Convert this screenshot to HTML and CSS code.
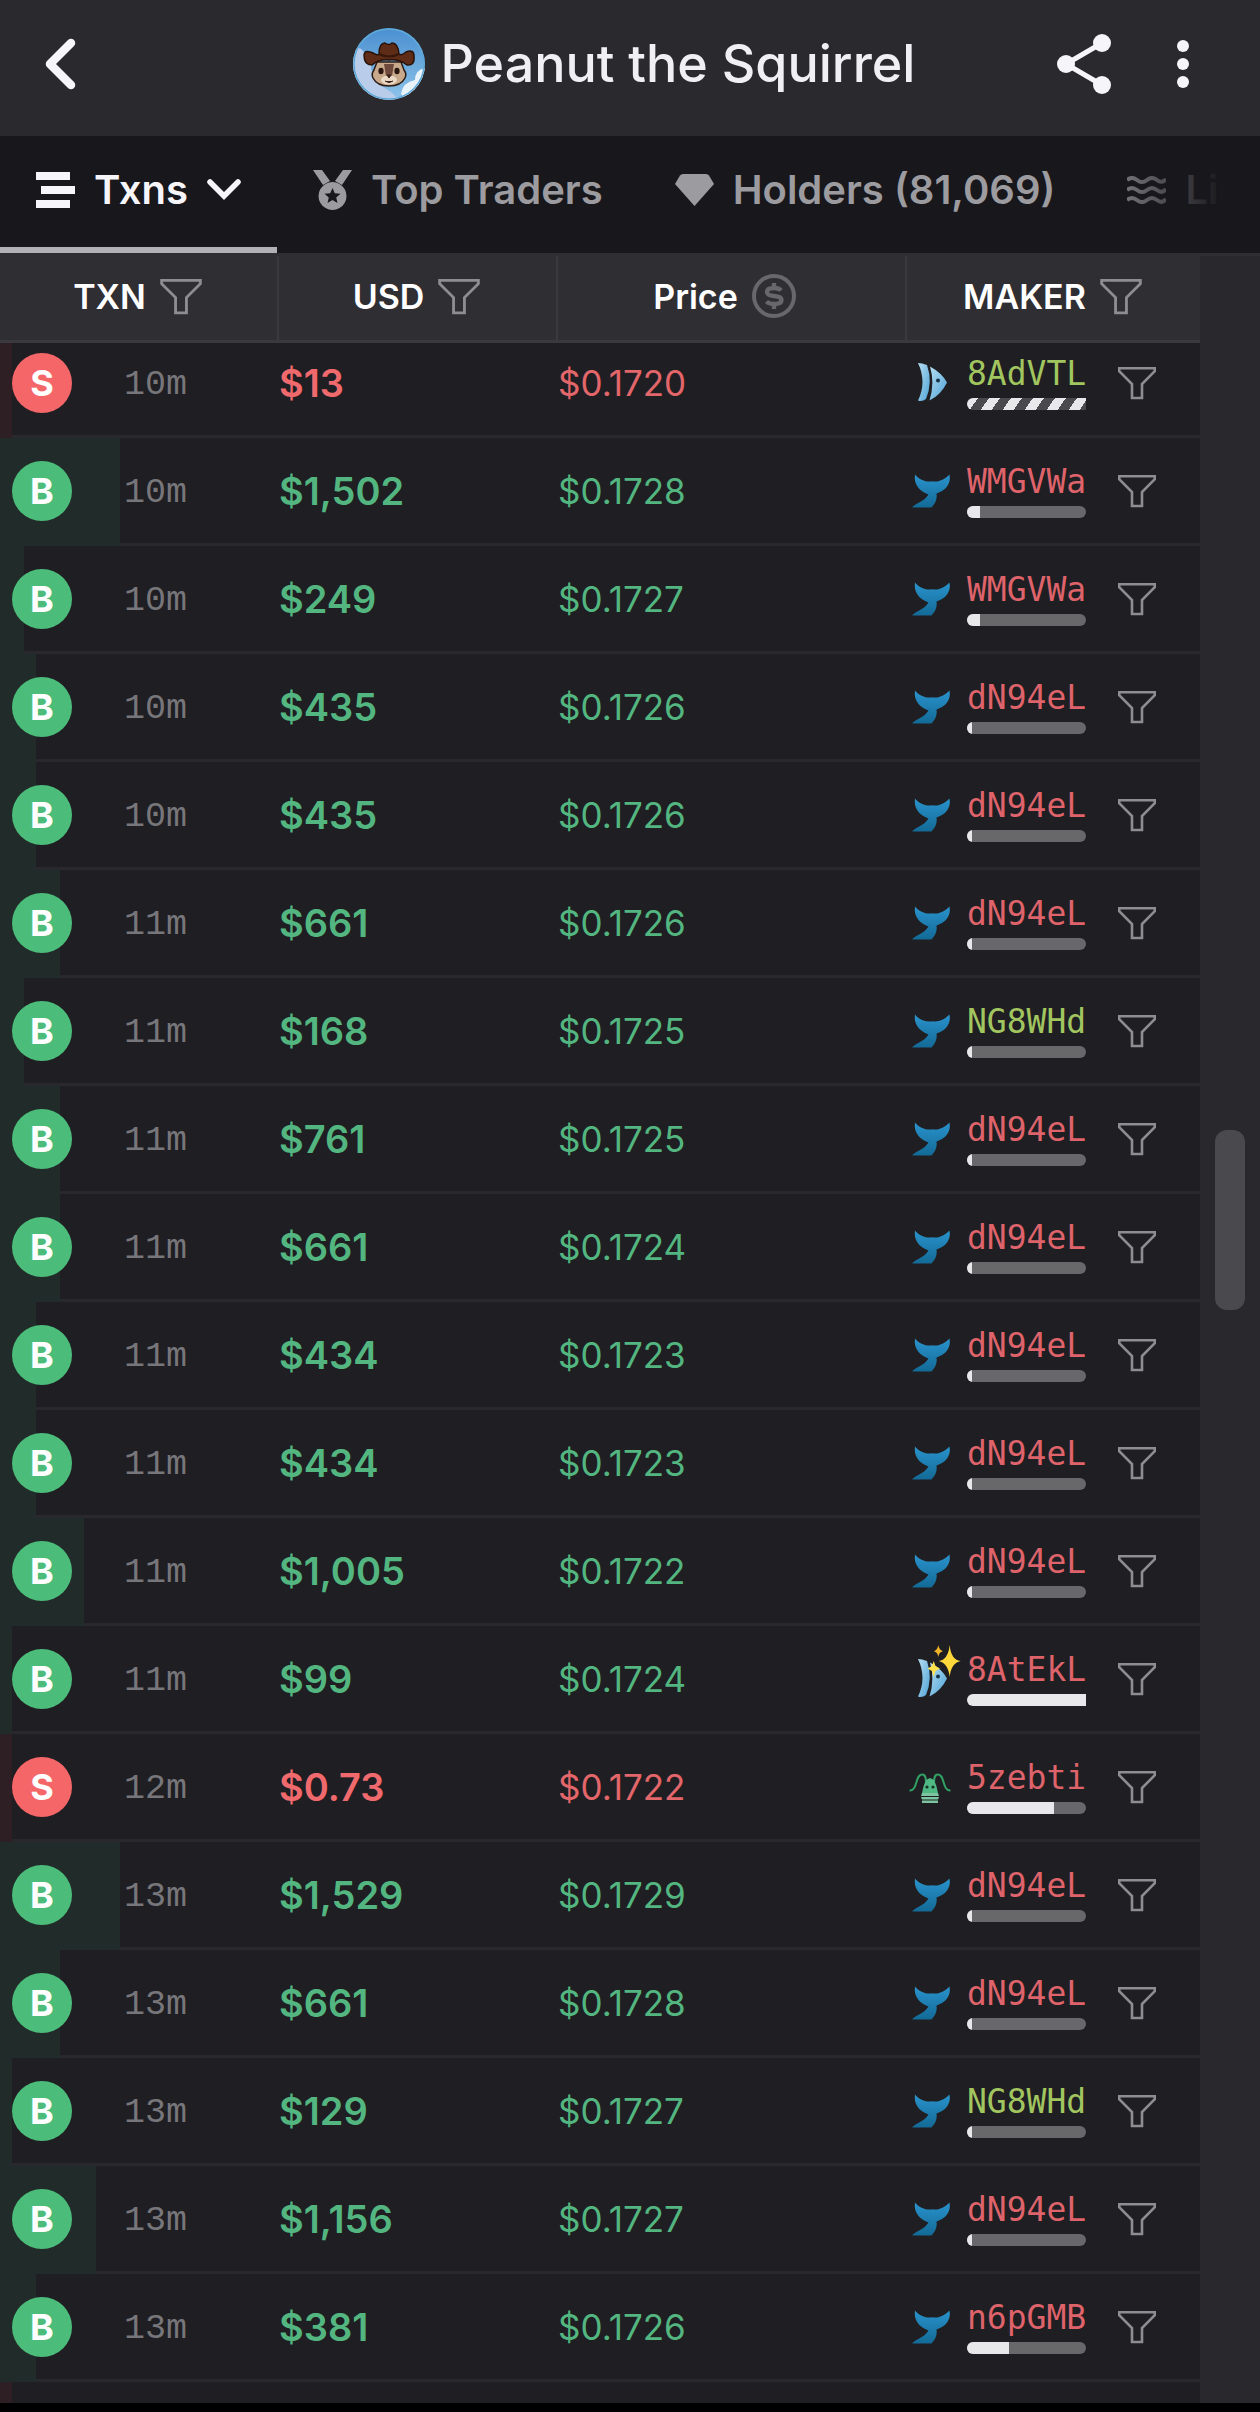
FILE: index.html
```html
<!DOCTYPE html>
<html lang="en">
<head>
<meta charset="utf-8">
<meta name="viewport" content="width=device-width, initial-scale=1">
<title>Peanut the Squirrel</title>
<link rel="stylesheet" href="styles.css">
</head>
<body>
<svg class="sprite" aria-hidden="true">
  <defs>
    <linearGradient id="g-whale" x1="0" y1="0" x2="0" y2="1"><stop offset="0" stop-color="#2a93cd"/><stop offset="1" stop-color="#136a96"/></linearGradient>
    <linearGradient id="g-fish" x1="0" y1="0" x2="1" y2="1"><stop offset="0" stop-color="#b5def0"/><stop offset="1" stop-color="#4fa3d8"/></linearGradient>
    <linearGradient id="g-sky" x1="0" y1="0" x2="0" y2="1"><stop offset="0" stop-color="#4a8fd0"/><stop offset="1" stop-color="#8dc4ea"/></linearGradient>
    <clipPath id="c-avatar"><circle cx="36" cy="36" r="36"/></clipPath>
  </defs>
  <symbol id="funnel" viewBox="0 0 38 34"><path d="M1.200 2.200H36.800V5.200L24 18V32H14V18L1.200 5.200Z" fill="none" stroke="currentColor" stroke-width="2.600"/></symbol>
  <symbol id="whale" viewBox="0 0 44 44"><path d="M7 5.500C11 11 19 13.500 24.700 12.300C31 13.500 37 10 41.500 5.500C43.500 15 37 22 28.500 24.500C29.500 30 27 35 23.500 38.500H4.200C7 34.500 16 33 20.500 25.500C11 22 5.500 15 7 5.500Z" fill="url(#g-whale)"/></symbol>
  <symbol id="fish" viewBox="0 0 44 44"><path d="M10 2Q14 2 19 4Q25 21 18 38Q14 41 10 39.500Q19 21 10 2Z" fill="url(#g-fish)"/><path d="M22 5.500Q34 12 39 21.500Q33 34 21.500 39.500Q27 22 22 5.500Z" fill="url(#g-fish)"/><circle cx="30" cy="19.500" r="2" fill="#17324a"/></symbol>
  <symbol id="lobster" viewBox="0 0 44 44"><path d="M1.500 25.500C10 26 7 9.500 14 9.500C18 9.500 18 14 18 18M42.500 25.500C34 26 37 9.500 30 9.500C26 9.500 26 14 26 18" fill="none" stroke="#31a065" stroke-width="2"/><path d="M22 13L26 15Q29 21 30 28H14Q15 21 18 15Z" fill="#4fb883"/><path d="M14 28h16l1 3H13ZM13 32h18l-1 2.500H14ZM14 35.500h16V38H14Z" fill="#7cc5a0"/><circle cx="19" cy="22" r="1.600" fill="#173325"/><circle cx="25" cy="22" r="1.600" fill="#173325"/></symbol>
  <symbol id="sparkles" viewBox="0 0 34 40"><path d="M21.700 2Q23 17 32.700 18Q23 20 21.700 34Q20 20 10.700 18Q20 17 21.700 2Z" fill="#ffd93b"/><path d="M10.300 2Q11 7 15 8.200Q11 9 10.300 14Q9.500 9 6 8.200Q9.500 7 10.300 2Z" fill="#f0b429"/><path d="M5.700 18L7.500 23L12 25.500L7.500 28L5.700 34L4 28L-.500 25.500L4 23Z" fill="#ffe14d"/></symbol>
</svg>

<div class="app">
  <header class="topbar">
    <button class="icon-btn back" aria-label="Back"><svg width="32" height="52" viewBox="0 0 32 52"><path d="M27 5L6 26L27 47" fill="none" stroke="#f6f5fa" stroke-width="8.500" stroke-linecap="round" stroke-linejoin="round"/></svg></button>
    <div class="token">
      <svg class="avatar" viewBox="0 0 72 72" role="img" aria-label="Token logo">
        <g clip-path="url(#c-avatar)">
          <rect width="72" height="72" fill="url(#g-sky)"/>
          <path d="M0 20Q8 18 12 26Q20 30 18 42Q30 48 28 58Q40 64 46 72H0Z" fill="#b9cdea"/>
          <path d="M72 40Q62 42 62 52Q50 54 48 66L54 72H72Z" fill="#e8f3fa"/>
        </g>
        <circle cx="36" cy="36" r="35" fill="none" stroke="#5fa9d8" stroke-width="1.500"/>
        <path d="M21 42Q18 46 20 50Q24 58 36 58Q48 58 52 50Q54 46 51 42L48 34H24Z" fill="#c9a98c" stroke="#2a1a14" stroke-width="1.500"/>
        <path d="M31 36h10l-2 12h-6Z" fill="#6f4a3c"/>
        <ellipse cx="36" cy="52" rx="8" ry="4.500" fill="#ead9c5"/>
        <ellipse cx="28" cy="43" rx="2.600" ry="3.200" fill="#2a1712"/><ellipse cx="44" cy="43" rx="2.600" ry="3.200" fill="#2a1712"/>
        <path d="M34 47h4l-2 3ZM32 53q4 3 8 0" fill="#3a211a" stroke="#3a211a"/>
        <path d="M11 27Q12 21 20 25Q25 28 26 26Q26 15 32 15Q36 18 39 15Q45 15 46 26Q48 28 53 24Q61 21 61 28Q62 38 54 37Q46 31 36 32Q26 31 19 37Q11 37 11 27Z" fill="#5e2c17" stroke="#2a120a" stroke-width="1.500"/>
        <path d="M26 26Q36 31 46 26" fill="none" stroke="#35170b" stroke-width="2"/>
      </svg>
      <h1 class="token-name">Peanut the Squirrel</h1>
    </div>
    <div class="actions">
      <button class="icon-btn" aria-label="Share"><svg width="54" height="60" viewBox="0 0 54 60"><path d="M45 9L9 30L45 51" fill="none" stroke="#f6f5fa" stroke-width="5"/><g fill="#f6f5fa"><circle cx="45" cy="9" r="9"/><circle cx="9" cy="30" r="9"/><circle cx="45" cy="51" r="9"/></g></svg></button>
      <button class="icon-btn more" aria-label="More"><svg width="12" height="50" viewBox="0 0 12 50" fill="#f6f5fa"><circle cx="6" cy="7" r="6"/><circle cx="6" cy="25" r="6"/><circle cx="6" cy="43" r="6"/></svg></button>
    </div>
  </header>

  <nav class="tabs">
    <button class="tab active"><svg width="39" height="36" viewBox="0 0 39 36" fill="currentColor"><path d="M0 0h34v8H0ZM5 14h34v8H5ZM0 28h34v8H0Z"/></svg>Txns<svg class="caret" width="34" height="22" viewBox="0 0 34 22"><path d="M3 3L17 17L31 3" fill="none" stroke="currentColor" stroke-width="5.500" stroke-linecap="round"/></svg></button>
    <button class="tab"><svg width="39" height="40" viewBox="0 0 39 40" fill="currentColor"><path d="M0 0h9l8 11l-7 4ZM39 0h-9l-8 11l7 4Z"/><path fill-rule="evenodd" d="M19.500 12a14 14 0 1 0 .010 0ZM19.500 18l2.300 5.200l5.700.500l-4.300 3.800l1.300 5.500l-5-3l-5 3l1.300-5.500l-4.300-3.800l5.700-.500Z"/></svg>Top Traders</button>
    <button class="tab"><svg width="39" height="32" viewBox="0 0 39 32" fill="currentColor"><path d="M8 0H31Q33 0 34 1.500L39 10L19.500 32L0 10L5 1.500Q6 0 8 0Z"/></svg>Holders (81,069)</button>
    <button class="tab"><svg width="39" height="28" viewBox="0 0 39 28" fill="none" stroke="currentColor" stroke-width="4"><path d="M0 4q5-4 10 0t10 0t10 0t9-1M0 14q5-4 10 0t10 0t10 0t9-1M0 24q5-4 10 0t10 0t10 0t9-1"/></svg>Liquidity</button>
  </nav>

  <main class="panel">
    <table class="txns">
      <thead>
        <tr>
          <th scope="col">TXN<svg class="head-icon"><use href="#funnel"/></svg></th>
          <th scope="col">USD<svg class="head-icon"><use href="#funnel"/></svg></th>
          <th scope="col" class="price-head">Price<svg class="coin" viewBox="0 0 44 44" fill="none" stroke="currentColor"><circle cx="22" cy="22" r="20" stroke-width="4"/><path d="M29 16.500Q27 14 22 14Q15 14 15 18Q15 21.500 22 22Q29.500 22.500 29.500 26Q29.500 30 22 30Q17 30 14.500 27.500M22 9V14M22 30V35" stroke-width="4.400"/></svg></th>
          <th scope="col">MAKER<svg class="head-icon"><use href="#funnel"/></svg></th>
        </tr>
      </thead>
      <tbody>
        <tr class="sell"><td><i class="fill" style="width:12px"></i><b class="side">S</b><time>10m</time></td><td class="usd">$13</td><td class="price">$0.1720</td><td class="maker"><svg class="tier"><use href="#fish"/></svg><a href="#" class="who fresh">8AdVTL<span class="bar striped"></span></a><button class="filter" aria-label="Filter by maker"><svg><use href="#funnel"/></svg></button></td></tr>
        <tr class="buy"><td><i class="fill" style="width:120px"></i><b class="side">B</b><time>10m</time></td><td class="usd">$1,502</td><td class="price">$0.1728</td><td class="maker"><svg class="tier"><use href="#whale"/></svg><a href="#" class="who">WMGVWa<span class="bar"><i style="width:11%"></i></span></a><button class="filter" aria-label="Filter by maker"><svg><use href="#funnel"/></svg></button></td></tr>
        <tr class="buy"><td><i class="fill" style="width:24px"></i><b class="side">B</b><time>10m</time></td><td class="usd">$249</td><td class="price">$0.1727</td><td class="maker"><svg class="tier"><use href="#whale"/></svg><a href="#" class="who">WMGVWa<span class="bar"><i style="width:11%"></i></span></a><button class="filter" aria-label="Filter by maker"><svg><use href="#funnel"/></svg></button></td></tr>
        <tr class="buy"><td><i class="fill" style="width:36px"></i><b class="side">B</b><time>10m</time></td><td class="usd">$435</td><td class="price">$0.1726</td><td class="maker"><svg class="tier"><use href="#whale"/></svg><a href="#" class="who">dN94eL<span class="bar"><i style="width:4%"></i></span></a><button class="filter" aria-label="Filter by maker"><svg><use href="#funnel"/></svg></button></td></tr>
        <tr class="buy"><td><i class="fill" style="width:36px"></i><b class="side">B</b><time>10m</time></td><td class="usd">$435</td><td class="price">$0.1726</td><td class="maker"><svg class="tier"><use href="#whale"/></svg><a href="#" class="who">dN94eL<span class="bar"><i style="width:4%"></i></span></a><button class="filter" aria-label="Filter by maker"><svg><use href="#funnel"/></svg></button></td></tr>
        <tr class="buy"><td><i class="fill" style="width:60px"></i><b class="side">B</b><time>11m</time></td><td class="usd">$661</td><td class="price">$0.1726</td><td class="maker"><svg class="tier"><use href="#whale"/></svg><a href="#" class="who">dN94eL<span class="bar"><i style="width:4%"></i></span></a><button class="filter" aria-label="Filter by maker"><svg><use href="#funnel"/></svg></button></td></tr>
        <tr class="buy"><td><i class="fill" style="width:24px"></i><b class="side">B</b><time>11m</time></td><td class="usd">$168</td><td class="price">$0.1725</td><td class="maker"><svg class="tier"><use href="#whale"/></svg><a href="#" class="who fresh">NG8WHd<span class="bar"><i style="width:4%"></i></span></a><button class="filter" aria-label="Filter by maker"><svg><use href="#funnel"/></svg></button></td></tr>
        <tr class="buy"><td><i class="fill" style="width:60px"></i><b class="side">B</b><time>11m</time></td><td class="usd">$761</td><td class="price">$0.1725</td><td class="maker"><svg class="tier"><use href="#whale"/></svg><a href="#" class="who">dN94eL<span class="bar"><i style="width:4%"></i></span></a><button class="filter" aria-label="Filter by maker"><svg><use href="#funnel"/></svg></button></td></tr>
        <tr class="buy"><td><i class="fill" style="width:60px"></i><b class="side">B</b><time>11m</time></td><td class="usd">$661</td><td class="price">$0.1724</td><td class="maker"><svg class="tier"><use href="#whale"/></svg><a href="#" class="who">dN94eL<span class="bar"><i style="width:4%"></i></span></a><button class="filter" aria-label="Filter by maker"><svg><use href="#funnel"/></svg></button></td></tr>
        <tr class="buy"><td><i class="fill" style="width:36px"></i><b class="side">B</b><time>11m</time></td><td class="usd">$434</td><td class="price">$0.1723</td><td class="maker"><svg class="tier"><use href="#whale"/></svg><a href="#" class="who">dN94eL<span class="bar"><i style="width:4%"></i></span></a><button class="filter" aria-label="Filter by maker"><svg><use href="#funnel"/></svg></button></td></tr>
        <tr class="buy"><td><i class="fill" style="width:36px"></i><b class="side">B</b><time>11m</time></td><td class="usd">$434</td><td class="price">$0.1723</td><td class="maker"><svg class="tier"><use href="#whale"/></svg><a href="#" class="who">dN94eL<span class="bar"><i style="width:4%"></i></span></a><button class="filter" aria-label="Filter by maker"><svg><use href="#funnel"/></svg></button></td></tr>
        <tr class="buy"><td><i class="fill" style="width:84px"></i><b class="side">B</b><time>11m</time></td><td class="usd">$1,005</td><td class="price">$0.1722</td><td class="maker"><svg class="tier"><use href="#whale"/></svg><a href="#" class="who">dN94eL<span class="bar"><i style="width:4%"></i></span></a><button class="filter" aria-label="Filter by maker"><svg><use href="#funnel"/></svg></button></td></tr>
        <tr class="buy"><td><i class="fill" style="width:12px"></i><b class="side">B</b><time>11m</time></td><td class="usd">$99</td><td class="price">$0.1724</td><td class="maker"><svg class="tier"><use href="#fish"/></svg><svg class="sparkles"><use href="#sparkles"/></svg><a href="#" class="who">8AtEkL<span class="bar full"><i style="width:100%"></i></span></a><button class="filter" aria-label="Filter by maker"><svg><use href="#funnel"/></svg></button></td></tr>
        <tr class="sell"><td><i class="fill" style="width:12px"></i><b class="side">S</b><time>12m</time></td><td class="usd">$0.73</td><td class="price">$0.1722</td><td class="maker"><svg class="tier"><use href="#lobster"/></svg><a href="#" class="who">5zebti<span class="bar"><i style="width:73%"></i></span></a><button class="filter" aria-label="Filter by maker"><svg><use href="#funnel"/></svg></button></td></tr>
        <tr class="buy"><td><i class="fill" style="width:120px"></i><b class="side">B</b><time>13m</time></td><td class="usd">$1,529</td><td class="price">$0.1729</td><td class="maker"><svg class="tier"><use href="#whale"/></svg><a href="#" class="who">dN94eL<span class="bar"><i style="width:4%"></i></span></a><button class="filter" aria-label="Filter by maker"><svg><use href="#funnel"/></svg></button></td></tr>
        <tr class="buy"><td><i class="fill" style="width:60px"></i><b class="side">B</b><time>13m</time></td><td class="usd">$661</td><td class="price">$0.1728</td><td class="maker"><svg class="tier"><use href="#whale"/></svg><a href="#" class="who">dN94eL<span class="bar"><i style="width:4%"></i></span></a><button class="filter" aria-label="Filter by maker"><svg><use href="#funnel"/></svg></button></td></tr>
        <tr class="buy"><td><i class="fill" style="width:12px"></i><b class="side">B</b><time>13m</time></td><td class="usd">$129</td><td class="price">$0.1727</td><td class="maker"><svg class="tier"><use href="#whale"/></svg><a href="#" class="who fresh">NG8WHd<span class="bar"><i style="width:4%"></i></span></a><button class="filter" aria-label="Filter by maker"><svg><use href="#funnel"/></svg></button></td></tr>
        <tr class="buy"><td><i class="fill" style="width:96px"></i><b class="side">B</b><time>13m</time></td><td class="usd">$1,156</td><td class="price">$0.1727</td><td class="maker"><svg class="tier"><use href="#whale"/></svg><a href="#" class="who">dN94eL<span class="bar"><i style="width:4%"></i></span></a><button class="filter" aria-label="Filter by maker"><svg><use href="#funnel"/></svg></button></td></tr>
        <tr class="buy"><td><i class="fill" style="width:36px"></i><b class="side">B</b><time>13m</time></td><td class="usd">$381</td><td class="price">$0.1726</td><td class="maker"><svg class="tier"><use href="#whale"/></svg><a href="#" class="who">n6pGMB<span class="bar"><i style="width:35%"></i></span></a><button class="filter" aria-label="Filter by maker"><svg><use href="#funnel"/></svg></button></td></tr>
        <tr class="sell"><td><i class="fill" style="width:12px"></i></td><td class="usd"></td><td class="price"></td><td class="maker"></td></tr>
      </tbody>
    </table>
    <div class="gutter"><span class="thumb"></span></div>
  </main>
</div>
</body>
</html>
```
FILE: styles.css
```css
:root {
  --bar: #2a292e;
  --row: #1f1e22;
  --head: #2f2e33;
  --line: #29282d;
  --muted: #9c9b9f;
  --green: #4cbc7b;
  --red: #f56669;
}

* { box-sizing: border-box; }

body {
  margin: 0;
  background: #000;
  color: #f0eff4;
  font-family: Inter, "Liberation Sans", sans-serif;
}

button {
  padding: 0;
  border: 0;
  background: none;
  color: inherit;
  font: inherit;
}

svg { display: block; flex: none; }

.sprite { position: absolute; width: 0; height: 0; }

.app {
  display: flex;
  flex-direction: column;
  height: 100vh;
  padding-bottom: 9px;
  overflow: hidden;
}

/* Top bar */
.topbar {
  display: grid;
  grid-template-columns: 1fr auto 1fr;
  align-items: center;
  flex: none;
  height: 136px;
  padding: 0 36px 8px 44px;
  background: var(--bar);
}
.icon-btn { display: flex; align-items: center; justify-content: center; }
.back { justify-self: start; }
.token { display: flex; align-items: center; gap: 16px; }
.avatar { width: 72px; height: 72px; }
.token-name {
  margin: 0;
  font-size: 52px;
  font-weight: 500;
  line-height: 60px;
  white-space: nowrap;
}
.actions { display: flex; justify-self: end; align-items: center; gap: 31px; }
.more { width: 82px; }

/* Tabs */
.tabs {
  display: flex;
  flex: none;
  height: 120px;
  overflow: hidden;
  background: #18171c;
  border-bottom: 3px solid var(--head);
  position: relative;
}
/* Fades out the tabs that run past the right edge. */
.tabs::after {
  content: "";
  position: absolute;
  inset: 0 0 0 auto;
  width: 180px;
  background: linear-gradient(90deg, transparent, #18171c 80%);
}
.tab {
  display: flex;
  flex: none;
  align-items: center;
  gap: 19px;
  padding: 0 36px 4px;
  border-bottom: 6px solid transparent;
  color: var(--muted);
  font-size: 40px;
  font-weight: 600;
  line-height: 48px;
  white-space: nowrap;
}
.tab.active { color: #f6f5fa; border-bottom-color: #b2b1b5; }

/* Transactions */
.panel { display: flex; flex: 1; min-height: 0; }
.txns {
  display: flex;
  flex-direction: column;
  flex: 1;
  overflow: hidden;
  background: var(--row);
}
.txns tr {
  display: grid;
  grid-template-columns: 277fr 279fr 349fr 295fr;
}
.txns thead {
  display: block;
  flex: none;
  position: relative;
  z-index: 1;
  background: var(--head);
  border-bottom: 3px solid #3a393f;
}
.txns th {
  display: flex;
  align-items: center;
  justify-content: center;
  gap: 14px;
  height: 84px;
  padding: 0 2px 4px 0;
  border-left: 2px solid #3a393f;
  color: #fff;
  font-size: 34px;
  font-weight: 600;
}
.txns th:first-child { border-left: 0; }
.txns th.price-head { padding-right: 14px; }
.head-icon { width: 42px; height: 37px; color: #8e8d92; }
.coin { width: 44px; height: 44px; color: #68676b; }

/* The list is scrolled slightly under its header. */
.txns tbody { display: block; margin-top: -13px; }
.txns tbody tr { height: 108px; border-bottom: 3px solid var(--line); }
.txns td {
  display: flex;
  align-items: center;
  position: relative;
  padding: 0 0 0 2px;
  white-space: nowrap;
}
.txns td:first-child { gap: 52px; padding-left: 12px; }
.fill {
  position: absolute;
  top: 0;
  bottom: -3px;
  left: 0;
  background: #212b29;
}
.sell .fill { background: #2e1f24; }
.side {
  display: grid;
  place-items: center;
  position: relative;
  width: 60px;
  height: 60px;
  border-radius: 50%;
  background: var(--green);
  color: #fff;
  font-size: 36px;
  font-weight: 700;
}
.sell .side { background: var(--red); }
time {
  position: relative;
  padding-top: 4px;
  color: #77767a;
  font-family: "Liberation Mono", monospace;
  font-size: 35px;
}
.usd { font-size: 38px; font-weight: 600; }
.price { font-size: 35px; }
.buy .usd, .buy .price { color: #53b680; }
.sell .usd { color: #f06a6d; }
.sell .price { color: #e2666a; }

.txns td.maker { padding-left: 3px; }
.tier { width: 44px; height: 44px; margin-right: 15px; }
.sparkles {
  position: absolute;
  top: 17px;
  left: 23px;
  width: 34px;
  height: 40px;
  overflow: visible;
}
.who {
  display: flex;
  flex-direction: column;
  gap: 6px;
  width: 119px;
  color: #de636a;
  font-family: "DejaVu Sans Mono", monospace;
  font-size: 33px;
  line-height: 36px;
  text-decoration: none;
}
.who.fresh { color: #a2c65f; }
.bar {
  display: block;
  height: 12px;
  overflow: hidden;
  border-radius: 6px;
  background: #68686a;
}
.bar i { display: block; height: 100%; background: #e8e8ea; }
.bar.full, .bar.striped { border-radius: 6px 0 0 6px; }
.bar.striped {
  background: repeating-linear-gradient(125deg, #e8e8ea 0 9px, #4a494d 9px 18px);
}
.filter { margin-left: 32px; color: #8e8d92; }
.filter svg { width: 38px; height: 34px; }

/* Scroll track */
.gutter {
  display: grid;
  grid-template-rows: 407fr 84fr 509fr;
  flex: none;
  width: 60px;
  background: var(--line);
}
.thumb {
  grid-row: 2;
  width: 30px;
  margin: 0 auto;
  border-radius: 12px;
  background: #4a494d;
}
```
